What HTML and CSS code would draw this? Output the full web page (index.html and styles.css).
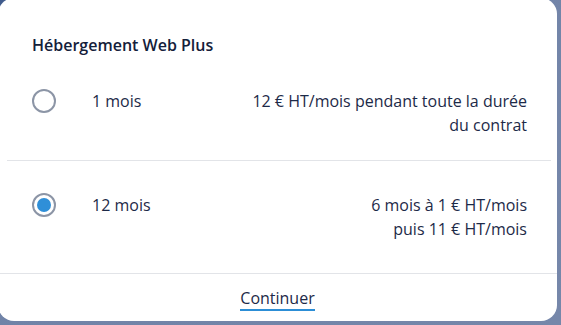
FILE: index.html
```html
<!DOCTYPE html>
<html lang="fr">
<head>
<meta charset="utf-8">
<link rel="stylesheet" href="styles.css">
</head>
<body>
<div class="dialog">
  <h2 class="title">Hébergement Web Plus</h2>
  <div class="options">
    <label class="option">
      <span class="radio"></span>
      <span class="term">1 mois</span>
      <span class="price"><span class="line">12 € HT/mois pendant toute la durée</span><span class="line">du contrat</span></span>
    </label>
    <label class="option option-last">
      <span class="radio radio-checked"></span>
      <span class="term">12 mois</span>
      <span class="price"><span class="line">6 mois à 1 € HT/mois</span><span class="line">puis 11 € HT/mois</span></span>
    </label>
  </div>
  <div class="footer">
    <a class="continue">Continuer</a>
  </div>
</div>
</body>
</html>
```
FILE: styles.css
```css
html, body {
  margin: 0;
  padding: 0;
}
body {
  width: 561px;
  height: 325px;
  overflow: hidden;
  background: linear-gradient(135deg, #3f5b8c 0%, #6f82a7 20%, #7687aa 100%);
  font-family: "Open Sans", "Noto Sans", sans-serif;
  color: #1d2a48;
}
.dialog {
  width: 559px;
  height: 323px;
  margin: -2px 0 0 -2px;
  background: #fff;
  border-radius: 16px;
  display: flex;
  flex-direction: column;
  box-sizing: border-box;
}
.title {
  margin: 0;
  padding: 37px 34px 0;
  font-size: 16px;
  line-height: 20px;
  font-weight: 600;
  color: #14203a;
}
.options {
  margin: 0 6px 0 9px;
}
.option {
  display: flex;
  align-items: flex-start;
  padding: 34px 24px 23px 25px;
  border-bottom: 1px solid #e2e4e8;
  font-size: 16px;
  line-height: 24px;
}
.option-last {
  border-bottom: none;
  padding: 32px 24px 32px 25px;
}
.radio {
  width: 24px;
  height: 24px;
  box-sizing: border-box;
  border: 2px solid #8c95a6;
  border-radius: 50%;
  flex: none;
  display: flex;
  align-items: center;
  justify-content: center;
}
.radio-checked::after {
  content: "";
  width: 14px;
  height: 14px;
  border-radius: 50%;
  background: #2f8fd8;
}
.term {
  margin-left: 36px;
  flex: none;
}
.price {
  flex: 1;
  text-align: right;
}
.line {
  display: block;
}
.footer {
  flex: 1;
  border-top: 1px solid #e2e4e8;
  display: flex;
  justify-content: center;
  align-items: flex-start;
  padding-top: 14px;
}
.continue {
  display: inline-block;
  font-size: 16px;
  line-height: 20px;
  padding-bottom: 1px;
  border-bottom: 2px solid #2c8ed6;
  color: #1d2a48;
  text-decoration: none;
}
```
